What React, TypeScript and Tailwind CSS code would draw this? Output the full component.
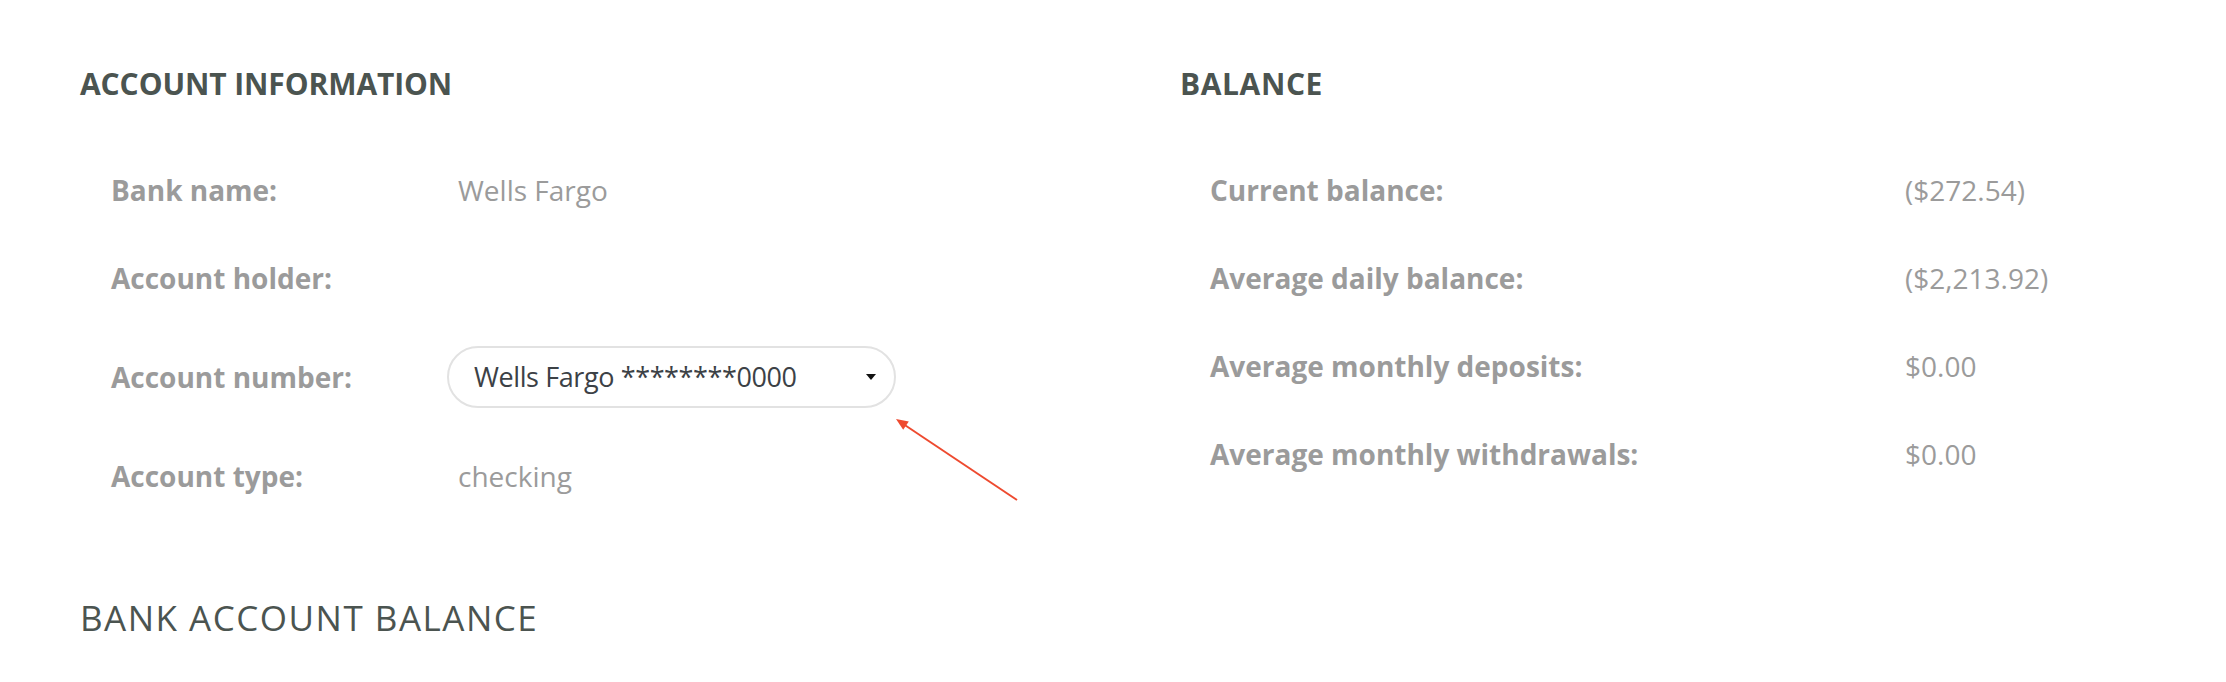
import React from "react";

function Row({
  label,
  value,
  labelW,
}: {
  label: string;
  value?: React.ReactNode;
  labelW: string;
}) {
  return (
    <div className="flex items-center py-[24px]">
      <div className={`${labelW} shrink-0 text-[28px] leading-[40px] font-bold text-[#9b9b9b]`}>{label}</div>
      <div className="text-[28px] leading-[40px] font-normal text-[#9b9b9b]">{value}</div>
    </div>
  );
}

export default function App() {
  return (
    <div className="relative w-[2226px] h-[682px] bg-white font-['Open_Sans',sans-serif] overflow-hidden">
      <div className="flex pl-[80px] pt-[64px]">
        <section className="w-[1100px] shrink-0">
          <h2 className="text-[30px] leading-[40px] font-bold tracking-[-0.1px] text-[#4b5450]">ACCOUNT INFORMATION</h2>
          <div className="mt-[42px] pl-[31px]">
            <Row labelW="w-[347px]" label="Bank name:" value="Wells Fargo" />
            <Row labelW="w-[347px]" label="Account holder:" value="" />
            <div className="flex items-center py-[24px]">
              <div className="w-[336px] shrink-0 text-[28px] leading-[40px] font-bold text-[#9b9b9b]">Account number:</div>
              <div className="w-[449px] h-[62px] rounded-full border-2 border-[#e2e2e2] flex items-center justify-between pl-[25px] pr-[18px]">
                <span className="text-[27px] leading-[40px] tracking-[-0.4px] text-[#3c4146]">Wells Fargo ********0000</span>
                <svg width="10" height="6" viewBox="0 0 10 6">
                  <path d="M0 0 L10 0 L5 6 Z" fill="#111" />
                </svg>
              </div>
            </div>
            <Row labelW="w-[347px]" label="Account type:" value="checking" />
          </div>
        </section>
        <section className="flex-1">
          <h2 className="text-[30px] leading-[40px] font-bold tracking-[0.6px] text-[#4b5450]">BALANCE</h2>
          <div className="mt-[42px] pl-[30px]">
            <Row labelW="w-[695px]" label="Current balance:" value="($272.54)" />
            <Row labelW="w-[695px]" label="Average daily balance:" value="($2,213.92)" />
            <Row labelW="w-[695px]" label="Average monthly deposits:" value="$0.00" />
            <Row labelW="w-[695px]" label="Average monthly withdrawals:" value="$0.00" />
          </div>
        </section>
      </div>
      <h2 className="mt-[74px] pl-[80px] text-[35px] leading-[48px] font-normal tracking-[1.5px] text-[#4b5450]">
        BANK ACCOUNT BALANCE
      </h2>
      <svg
        className="absolute left-0 top-0 pointer-events-none"
        width="2226"
        height="682"
        viewBox="0 0 2226 682"
      >
        <line x1="1017" y1="500" x2="904" y2="424.5" stroke="#ee4a2f" strokeWidth="2" />
        <path d="M896 419 L908.8 421.5 L903.2 429.8 Z" fill="#ee4a2f" />
      </svg>
    </div>
  );
}
